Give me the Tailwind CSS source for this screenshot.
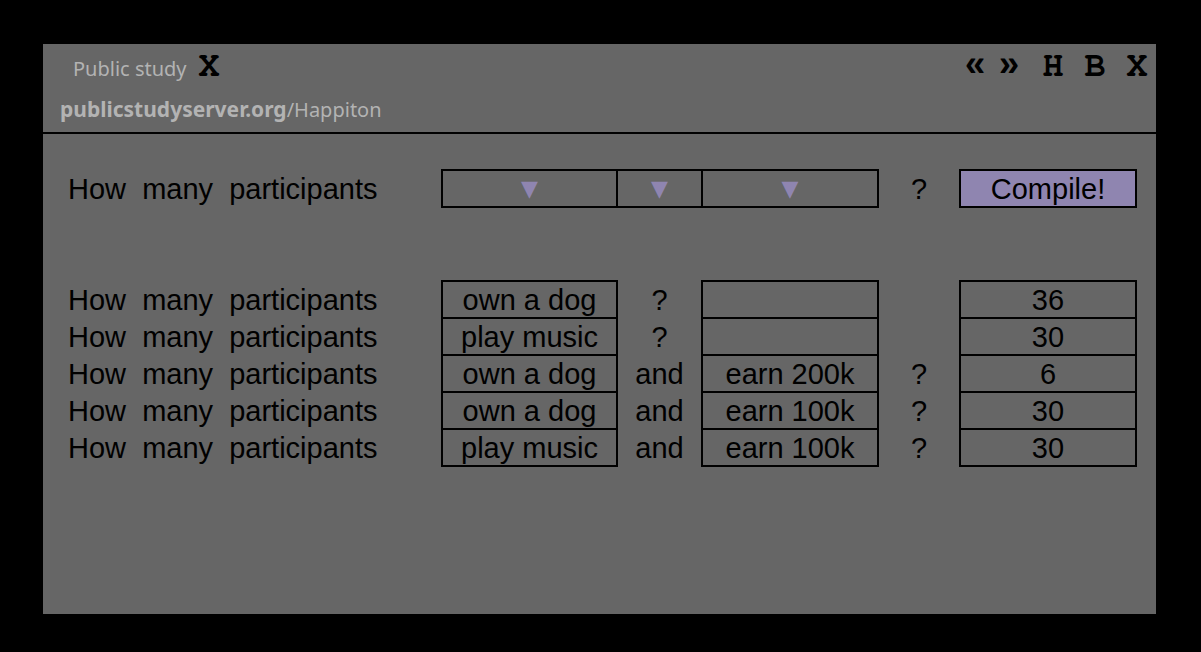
<!DOCTYPE html>
<html lang="en">
<head>
<meta charset="utf-8">
<meta name="viewport" content="width=device-width, initial-scale=1">
<title>Public study</title>
<script src="https://cdn.jsdelivr.net/npm/@tailwindcss/browser@4"></script>
</head>
<body class="flex min-h-screen bg-black pt-11 pr-[45px] pb-[38px] pl-[43px] font-['Liberation_Sans',sans-serif] text-[29px] leading-[33px] text-black">
<main class="flex-1 bg-[#666666]">
  <header class="border-b-2 border-black pb-[3px] pl-[17px] pr-2">
    <div class="mb-[3px] flex h-[43px] items-center justify-between">
      <div class="flex items-center gap-3 pl-[13px]">
        <h1 class="pt-[6px] font-['Noto_Sans',sans-serif] text-[20px] font-normal text-[#b3b3b3]">Public study</h1>
        <button type="button" aria-label="Close tab" class="font-['Courier_10_Pitch','FreeMono','Nimbus_Mono_PS','DejaVu_Serif',serif] text-[35px] font-bold leading-none">X</button>
      </div>
      <nav aria-label="Browser" class="flex items-center font-['Courier_10_Pitch','FreeMono','Nimbus_Mono_PS','DejaVu_Serif',serif] text-[35px] font-bold leading-none">
        <button type="button" aria-label="Back" class="w-[34px] pt-[3px] font-['Liberation_Mono',monospace] text-[36px]">«</button>
        <button type="button" aria-label="Forward" class="mr-[6px] w-[34px] pt-[3px] font-['Liberation_Mono',monospace] text-[36px]">»</button>
        <button type="button" aria-label="Home" class="w-[42px]">H</button>
        <button type="button" aria-label="Bookmarks" class="w-[42px]">B</button>
        <button type="button" aria-label="Close window" class="-mr-[10px] w-[42px]">X</button>
      </nav>
    </div>
    <a href="#" class="block font-['Noto_Sans',sans-serif] text-[21px] leading-[38px] text-[#b3b3b3]"><b class="font-bold">publicstudyserver.org</b><span class="text-[20px]">/Happiton</span></a>
  </header>

  <form class="pt-[35px] pr-[19px] pl-[25px]">
    <table class="w-full table-fixed border-collapse text-center">
      <colgroup><col><col class="w-[175px]"><col class="w-[85px]"><col class="w-[176px]"><col class="w-[82px]"><col class="w-[176px]"></colgroup>
      <tbody>
      <tr class="h-[37px]">
        <th scope="row" class="whitespace-pre p-0 pt-[2px] text-left font-normal">How  many  participants</th>
        <td class="border-2 border-black p-0"><select aria-label="First condition" class="block w-full appearance-none text-center font-['DejaVu_Sans',sans-serif] text-[22px] leading-[35px] text-[#8f85b0]"><option>▼</option><option>own a dog</option><option>play music</option></select></td>
        <td class="border-2 border-black p-0"><select aria-label="Operator" class="block w-full appearance-none text-center font-['DejaVu_Sans',sans-serif] text-[22px] leading-[35px] text-[#8f85b0]"><option>▼</option><option>and</option><option>?</option></select></td>
        <td class="border-2 border-black p-0"><select aria-label="Second condition" class="block w-full appearance-none text-center font-['DejaVu_Sans',sans-serif] text-[22px] leading-[35px] text-[#8f85b0]"><option>▼</option><option>earn 100k</option><option>earn 200k</option></select></td>
        <td class="p-0 pt-[2px]">?</td>
        <td class="border-2 border-black p-0"><button type="button" class="block w-full bg-[#8f85b0] pt-[2px]">Compile!</button></td>
      </tr>
      </tbody>
    </table>

    <table class="mt-[72px] w-full table-fixed border-collapse text-center">
      <colgroup><col><col class="w-[175px]"><col class="w-[85px]"><col class="w-[176px]"><col class="w-[82px]"><col class="w-[176px]"></colgroup>
      <tbody>
      <tr class="h-[37px]">
        <th scope="row" class="whitespace-pre p-0 pt-[2px] text-left font-normal">How  many  participants</th>
        <td class="border-2 border-black p-0 pt-[2px]">own a dog</td><td class="p-0 pt-[2px]">?</td><td class="border-2 border-black p-0"></td><td class="p-0"></td><td class="border-2 border-black p-0 pt-[2px]">36</td>
      </tr>
      <tr class="h-[37px]">
        <th scope="row" class="whitespace-pre p-0 pt-[2px] text-left font-normal">How  many  participants</th>
        <td class="border-2 border-black p-0 pt-[2px]">play music</td><td class="p-0 pt-[2px]">?</td><td class="border-2 border-black p-0"></td><td class="p-0"></td><td class="border-2 border-black p-0 pt-[2px]">30</td>
      </tr>
      <tr class="h-[37px]">
        <th scope="row" class="whitespace-pre p-0 pt-[2px] text-left font-normal">How  many  participants</th>
        <td class="border-2 border-black p-0 pt-[2px]">own a dog</td><td class="p-0 pt-[2px]">and</td><td class="border-2 border-black p-0 pt-[2px]">earn 200k</td><td class="p-0 pt-[2px]">?</td><td class="border-2 border-black p-0 pt-[2px]">6</td>
      </tr>
      <tr class="h-[37px]">
        <th scope="row" class="whitespace-pre p-0 pt-[2px] text-left font-normal">How  many  participants</th>
        <td class="border-2 border-black p-0 pt-[2px]">own a dog</td><td class="p-0 pt-[2px]">and</td><td class="border-2 border-black p-0 pt-[2px]">earn 100k</td><td class="p-0 pt-[2px]">?</td><td class="border-2 border-black p-0 pt-[2px]">30</td>
      </tr>
      <tr class="h-[37px]">
        <th scope="row" class="whitespace-pre p-0 pt-[2px] text-left font-normal">How  many  participants</th>
        <td class="border-2 border-black p-0 pt-[2px]">play music</td><td class="p-0 pt-[2px]">and</td><td class="border-2 border-black p-0 pt-[2px]">earn 100k</td><td class="p-0 pt-[2px]">?</td><td class="border-2 border-black p-0 pt-[2px]">30</td>
      </tr>
      </tbody>
    </table>
  </form>
</main>
</body>
</html>
